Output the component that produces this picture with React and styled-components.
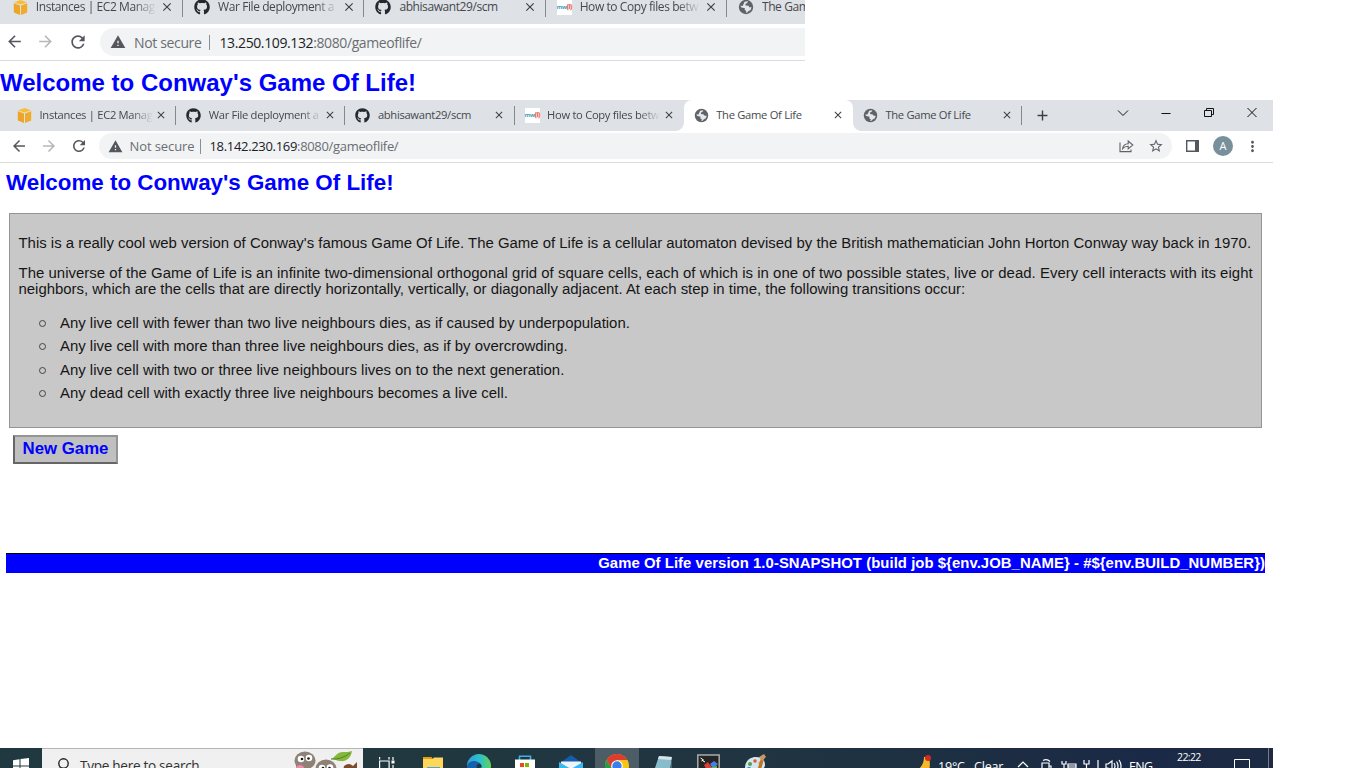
import React from "react";
import styled, { createGlobalStyle, css } from "styled-components";
import {
  MdArrowBack, MdArrowForward, MdRefresh, MdWarning, MdClose, MdStarBorder, MdMoreVert, MdAdd, MdPublic,
} from "react-icons/md";
import { FaGithub } from "react-icons/fa";

const Global = createGlobalStyle`
  * { box-sizing: border-box; }
  body { margin: 0; background: #fff; overflow: hidden; }
  svg { display: block; flex: none; }
`;

const ui = css`font-family: "Open Sans", "Noto Sans", sans-serif;`;

const Screen = styled.div`
  width: 1366px;
  height: 768px;
  display: flex;
  flex-direction: column;
  overflow: hidden;
  background: #fff;
  font-family: "Liberation Sans", Arial, sans-serif;
`;
const UpperShot = styled.section`
  width: 805px;
  height: 100px;
  overflow: hidden;
  flex: none;
`;
const LowerShot = styled.section`
  width: 1273px;
  height: 668px;
  display: flex;
  flex-direction: column;
  overflow: hidden;
`;

/* browser chrome */
const TabStrip = styled.div`
  ${ui}
  display: flex;
  background: #dee1e6;
  height: ${(p) => p.$h}px;
  padding-left: ${(p) => p.$left}px;
  overflow: hidden;
`;
const Tab = styled.div`
  position: relative;
  display: flex;
  flex: none;
  align-items: center;
  width: ${(p) => (p.$big ? 181.3 : 169.2)}px;
  height: ${(p) => (p.$big ? 34 : 31)}px;
  margin-top: ${(p) => (p.$big ? -10 : 0)}px;
  padding-left: ${(p) => (p.$big ? 11 : 10)}px;
  padding-bottom: ${(p) => (p.$big ? 0 : 1)}px;
  color: #45494d;
  background: ${(p) => (p.$active ? "#fff" : "transparent")};
  border-radius: ${(p) => (p.$active ? "8px 8px 0 0" : "0")};
  &::before, &::after {
    content: ${(p) => (p.$active ? '""' : "none")};
    position: absolute;
    bottom: 0;
    width: 8px;
    height: 8px;
  }
  &::before { left: -8px; background: radial-gradient(circle at 0 0, transparent 7.5px, #fff 8px); }
  &::after { right: -8px; background: radial-gradient(circle at 100% 0, transparent 7.5px, #fff 8px); }
`;
const TabTitle = styled.span`
  width: ${(p) => (p.$big ? 119 : 112)}px;
  margin-left: ${(p) => (p.$big ? 8 : 7.5)}px;
  font-size: ${(p) => (p.$big ? 12 : 11.2)}px;
  line-height: 18px;
  letter-spacing: ${(p) => p.$track || 0}px;
  white-space: nowrap;
  overflow: hidden;
  mask-image: ${(p) => (p.$fade ? "linear-gradient(90deg, #000 82%, transparent 101%)" : "none")};
`;
const TabClose = styled(MdClose)`
  margin-left: ${(p) => (p.$big ? 5 : 3.5)}px;
  color: #3c4043;
`;
const Divider = styled.i`
  flex: none;
  width: 1px;
  height: ${(p) => p.$h}px;
  margin-left: auto;
  background: #84888c;
`;
const FaviconMw = styled.span`
  flex: none;
  display: flex;
  align-items: center;
  justify-content: center;
  width: 15px;
  height: 15px;
  background: #fff;
  color: #4a9cc9;
  font-size: 6px;
  font-weight: 700;
  letter-spacing: -0.4px;
  b { color: #e8604c; }
`;
const NewTab = styled(MdAdd)`
  margin: 7px 0 0 12px;
  color: #3c4043;
`;
const WindowButtons = styled.div`
  display: flex;
  margin-left: auto;
  padding: 5px 13px 0 0;
  gap: 27px;
  color: #111;
`;
const Toolbar = styled.div`
  ${ui}
  display: flex;
  flex: none;
  align-items: center;
  height: ${(p) => (p.$big ? 37 : 32)}px;
  padding-left: ${(p) => (p.$big ? 4.5 : 9.5)}px;
  padding-bottom: ${(p) => (p.$big ? 0 : 1)}px;
  border-bottom: 1px solid #d9dbde;
  background: #fff;
  color: #54585c;
  overflow: hidden;
`;
const NavIcons = styled.div`
  display: flex;
  gap: ${(p) => (p.$big ? 12.5 : 12)}px;
  width: ${(p) => (p.$big ? 95.5 : 89.5)}px;
  flex: none;
`;
const AddressBar = styled.div`
  display: flex;
  align-items: center;
  width: ${(p) => (p.$big ? 900 : 1073)}px;
  flex: none;
  height: ${(p) => (p.$big ? 28 : 26)}px;
  padding-left: ${(p) => (p.$big ? 10 : 8.5)}px;
  border-radius: 14px;
  background: #f1f3f4;
  font-size: ${(p) => (p.$big ? 14 : 13)}px;
  white-space: nowrap;
  color: #6a6e73;
`;
const NotSecure = styled.span`
  width: ${(p) => p.$w}px;
  margin-left: ${(p) => p.$gap}px;
  letter-spacing: ${(p) => p.$track}px;
`;
const Bar = styled.i`
  width: 1px;
  height: 15px;
  background: #8c9094;
`;
const Url = styled.span`
  margin-left: ${(p) => p.$gap}px;
  letter-spacing: ${(p) => p.$track}px;
  b { font-weight: 400; color: #202124; }
`;
const AddressActions = styled.div`
  display: flex;
  align-items: center;
  gap: 14px;
  margin-left: auto;
  padding-right: 8.5px;
`;
const Actions = styled.div`
  display: flex;
  align-items: center;
  margin-left: 14px;
`;
const Avatar = styled.span`
  width: 20px;
  height: 20px;
  margin: 0 11px 0 14px;
  border-radius: 50%;
  background: #78909c;
  color: #fff;
  font-size: 11px;
  line-height: 20px;
  text-align: center;
`;

/* page */
const Heading = styled.h1`
  margin: 0;
  color: #0000ff;
  font-weight: 700;
  white-space: nowrap;
  font-size: ${(p) => (p.$big ? 24 : 22.36)}px;
  line-height: 28px;
  padding: ${(p) => (p.$big ? "8px 0 0 0" : "6px 0 0 6px")};
`;
const Intro = styled.article`
  width: 1253px;
  height: 215px;
  flex: none;
  margin: 16px 0 0 9px;
  padding: 21px 0 0 8.5px;
  border: 1px solid #949494;
  background: #c8c8c8;
  color: #161616;
  font-size: 14.93px;
  white-space: nowrap;
`;
const Paragraph = styled.p`
  margin: 0 0 14px;
  line-height: 16px;
`;
const Line = styled.span`
  display: block;
  letter-spacing: ${(p) => p.$track || 0}px;
`;
const Rules = styled.ul`
  list-style: none;
  margin: 12.5px 0 0;
  padding: 0;
`;
const Rule = styled.li`
  display: flex;
  align-items: center;
  height: 23.3px;
  padding-left: 20.5px;
  &::before {
    content: "";
    width: 5px;
    height: 5px;
    margin: 2px 14px 0 0;
    border: 1px solid #444;
    border-radius: 50%;
  }
`;
const NewGame = styled.button`
  align-self: flex-start;
  flex: none;
  width: 105px;
  height: 29px;
  margin: 7px 0 0 13px;
  padding: 0 0 2px;
  border: 2px solid;
  border-color: #949494 #949494 #666 #666;
  background: #c0c0c0;
  color: #0000ff;
  font: 700 16.8px "Liberation Sans", Arial, sans-serif;
  white-space: nowrap;
`;
const Footer = styled.footer`
  flex: none;
  width: 1259px;
  height: 20px;
  margin: 89px 0 0 6px;
  border-top: 1px solid #000;
  background: #0000ff;
  color: #fff;
  font-size: 14.9px;
  font-weight: 700;
  line-height: 18px;
  letter-spacing: 0.045px;
  text-align: right;
  white-space: nowrap;
`;

/* taskbar */
const Taskbar = styled.div`
  ${ui}
  flex: none;
  height: 20px;
  margin-top: auto;
  overflow: hidden;
  background: linear-gradient(90deg, #20383f 0, #21383f 30%, #203441 60%, #1d2f42 75%, #1a2946 90%, #1d2a42 100%);
`;
const TaskRow = styled.div`
  display: flex;
  height: 36px;
  align-items: center;
  color: #fff;
`;
const Slot = styled.div`
  display: flex;
  flex: none;
  width: ${(p) => p.$w || 45.9}px;
  height: 36px;
  align-items: center;
  justify-content: center;
`;
const AppSlots = styled.div`
  display: flex;
  margin-left: 1.5px;
`;
const AppSlot = styled(Slot)`
  background: ${(p) => (p.$active ? "linear-gradient(90deg, transparent 1px, #4d5d65 1px 45px, transparent 45px)" : "transparent")};
`;
const Search = styled.div`
  display: flex;
  flex: none;
  width: 321px;
  height: 36px;
  align-items: center;
  padding: 0 0 2px 14px;
  border-top: 1px solid #b5b5b5;
  background: #f0f0f0;
  color: #333;
  font-size: 13.6px;
  span { margin-left: 11px; white-space: nowrap; letter-spacing: -0.3px; }
  svg:last-child { margin-left: auto; margin-right: 5px; }
`;
const Tray = styled.div`
  display: flex;
  align-items: center;
  height: 34px;
  margin-left: auto;
  font-size: 12.5px;
  white-space: nowrap;
`;
const TrayItem = styled.span`
  display: flex;
  flex: none;
  width: ${(p) => p.$w}px;
  letter-spacing: ${(p) => p.$track || 0}px;
`;
const Clock = styled.span`
  align-self: flex-start;
  width: 57px;
  padding-top: 1px;
  font-size: 10.5px;
  line-height: 15px;
  letter-spacing: -0.6px;
`;

const Cube = () => (
  <svg width="15" height="15" viewBox="0 0 15 15">
    <path d="M7.5 0 14 2.4 7.5 4.6 1 2.4z" fill="#f9bd35" />
    <path d="M.8 3.3 7 5.4V15L.8 12.6z" fill="#eca529" />
    <path d="M14.2 3.3 8 5.4V15l6.2-2.4z" fill="#f0ab2b" />
  </svg>
);
const Mw = () => <FaviconMw>mw<b>(i)</b></FaviconMw>;
const Globe = ({ size }) => (
  <svg width={size} height={size} viewBox="0 0 16 16">
    <circle cx="8" cy="8" r="7.200" fill="#5f6368" />
    <path d="M6.500 2.800 10 2.300 9 4.200 7.400 4.800 7.600 6.400 10.500 6.800 11.300 8.200 13.600 8.300 12.600 11 10.300 12.200 9.200 13.600 7.800 13.800 8.300 12 6.600 10.800 7 9.200 3.500 8.400 2.300 6.800 4.600 7 5.500 5.200z" fill="#e4e6ea" />
  </svg>
);

function tabIcon(kind, big) {
  if (kind === "aws") return <Cube />;
  if (kind === "git") return <FaGithub size={big ? 16 : 15} color="#24292f" />;
  if (kind === "mw") return <Mw />;
  return <Globe size={big ? 16 : 15} />;
}

const tabs = [
  { icon: "aws", title: "Instances | EC2 Manag", fade: true },
  { icon: "git", title: "War File deployment a", fade: true },
  { icon: "git", title: "abhisawant29/scm" },
  { icon: "mw", title: "How to Copy files betw", fade: true },
  { icon: "globe", title: "The Game Of Life", active: true },
  { icon: "globe", title: "The Game Of Life" },
];

function Tabs({ big }) {
  return (big ? tabs.slice(0, 5) : tabs).map((t, i) => {
    const beforeActive = !big && i === 3;
    const active = !big && t.active;
    return (
      <Tab key={i} $big={big} $active={active}>
        {tabIcon(t.icon, big)}
        <TabTitle $big={big} $fade={t.fade} $track={big ? -0.42 : -0.3}>{t.title}</TabTitle>
        <TabClose $big={big} size={big ? 14 : 12} />
        {!active && !beforeActive && <Divider $h={big ? 20 : 19} />}
      </Tab>
    );
  });
}

const ShareIcon = () => (
  <svg width="15" height="14" viewBox="0 0 15 14" fill="none" stroke="#5f6368" strokeWidth="1.1">
    <path d="M1 3.500V12.600h11V10.500M3.600 9.700C4 6.400 6 4.800 9.200 4.700V2l4.600 4-4.600 3.800V7.300C6.600 7.300 5 8 3.600 9.700z" />
  </svg>
);
const PanelIcon = () => (
  <svg width="13" height="12" viewBox="0 0 13 12">
    <path d="M.7.700h11.600v10.600H.7z" fill="none" stroke="#54585c" strokeWidth="1.400" />
    <path d="M9 0H13v12H9z" fill="#54585c" />
  </svg>
);

const WinLogo = () => (
  <svg width="16" height="16" viewBox="0 0 16 16" fill="#fff">
    <path d="M0 2.200 6.500 1.300V7.400H0zM7.500 1.100 16 0v7.400H7.500zM0 8.500h6.500v6.100L0 13.700zM7.500 8.500H16V16l-8.500-1.200z" />
  </svg>
);
const Magnifier = () => (
  <svg width="13" height="16" viewBox="0 0 13 16" fill="none" stroke="#222" strokeWidth="1.400">
    <circle cx="7.500" cy="5.500" r="4.700" />
    <path d="M4.500 9.500 .8 14.500" />
  </svg>
);
const Critters = () => (
  <svg width="64" height="30" viewBox="0 0 64 30">
    <ellipse cx="11" cy="9.500" rx="10.500" ry="9" fill="#8d8275" />
    <path d="M2 14h13v10H2z" fill="#8d8275" />
    <circle cx="7" cy="8" r="3.300" fill="#fff" /><circle cx="15" cy="7" r="3.300" fill="#fff" />
    <circle cx="8" cy="8" r="1.300" fill="#181818" /><circle cx="14.500" cy="7.500" r="1.300" fill="#181818" />
    <path d="M2 16q4-4 8 0l-1 5H3z" fill="#f08bb0" />
    <ellipse cx="32" cy="18" rx="10.500" ry="9.500" fill="#8d8275" />
    <circle cx="28" cy="17" r="3.300" fill="#fff" /><circle cx="36" cy="16.500" r="3.300" fill="#fff" />
    <circle cx="29" cy="17" r="1.300" fill="#181818" /><circle cx="35.500" cy="17" r="1.300" fill="#181818" />
    <path d="M37 8c4-1 5-7 12-7 4 0 6 0 9-1-1 7-6 11-12 10-3 0-5-2-9-2z" fill="#86b83d" />
    <path d="M37 8q10 1 19-6" fill="none" stroke="#4f812e" />
    <path d="M50 15q5-4 9 0l4-4v9H49z" fill="#7b4a2c" />
  </svg>
);
const TaskView = () => (
  <svg width="16" height="22" viewBox="0 0 16 22" fill="none" stroke="#fff" strokeWidth="1.200">
    <path d="M.6 2v2.600M10 2v2.600M.6 6h9.500v9H.6zM14 2v3M14 10v9" />
    <path d="M12.500 5.500h3v3h-3z" fill="#fff" stroke="none" />
  </svg>
);
const Explorer = () => (
  <svg width="21" height="20" viewBox="0 0 21 20">
    <path d="M0 1h8.500l1.500 2H0z" fill="#e0a010" />
    <path d="M0 3h9.500l1.500-1.500H20V19H0z" fill="#ffd65c" />
    <path d="M4 11h13v8H4z" fill="#48a4e4" />
  </svg>
);
const Edge = () => (
  <svg width="24" height="24" viewBox="0 0 24 24">
    <defs>
      <linearGradient id="edge"><stop offset="0" stopColor="#2c9fe0" /><stop offset=".55" stopColor="#31bfc6" /><stop offset="1" stopColor="#62d353" /></linearGradient>
    </defs>
    <circle cx="12" cy="12" r="12" fill="url(#edge)" />
    <path d="M0 13C1 6 8 6 12 8.500c3 2 2.500 4 2 6H9L7 22C2 20 0 17 0 13z" fill="#1460ac" />
    <path d="M10 10.500q4-2.500 4.800 2.500L9.500 15z" fill="#203441" />
  </svg>
);
const Store = () => (
  <svg width="20" height="22" viewBox="0 0 20 22">
    <path d="M4.500 5V1.200h11V5" fill="none" stroke="#35b4ea" strokeWidth="1.600" />
    <path d="M0 4.500h20V22H0z" fill="#fff" />
    <path d="M5 8h4v4H5z" fill="#e84b1c" /><path d="M10 8h4v4h-4z" fill="#7eb800" />
  </svg>
);
const Mail = () => (
  <svg width="24" height="23" viewBox="0 0 24 23">
    <path d="M1 8 12 0l11 8z" fill="#145cac" />
    <path d="M2 6.500h20V14H2z" fill="#eef5fa" />
    <path d="M0 7 12 14 24 7V22H0z" fill="#39b7ee" />
  </svg>
);
const Chrome = () => (
  <svg width="24" height="24" viewBox="0 0 24 24">
    <circle cx="12" cy="12" r="12" fill="#f5c518" />
    <path d="M1.600 6A12 12 0 0 1 22.400 6H12L7 15z" fill="#df3b2f" />
    <path d="M1.600 6A12 12 0 0 0 12 24l5-9H7z" fill="#29994a" />
    <circle cx="12" cy="12" r="5.800" fill="#fff" /><circle cx="12" cy="12" r="4.700" fill="#3c7fec" />
  </svg>
);
const Notepad = () => (
  <svg width="22" height="22" viewBox="0 0 22 22">
    <path d="M7 1 20 2l-3 20H0z" fill="#89bccb" />
    <path d="M7 1 20 2l-.5 3L6 4z" fill="#d4e4e8" />
    <path d="M20 2v18l-3 2z" fill="#51636c" />
  </svg>
);
const Remote = () => (
  <svg width="23" height="24" viewBox="0 0 23 24">
    <path d="M.8 1h21.400v22H.8z" fill="#252525" stroke="#aaa" strokeWidth="1.500" />
    <path d="m3.500 4 3 2-2 1M6 7l2 1" stroke="#fff" fill="none" />
    <path d="m7 11 4-3 4 6-3 6z" fill="#d84137" /><path d="m13 10 4-3 4 3-5 5z" fill="#497ee8" /><path d="m13 14 7-2v7h-6z" fill="#68bd3c" />
  </svg>
);
const Paint = () => (
  <svg width="24" height="24" viewBox="0 0 24 24">
    <path d="M2 14C2 7 7 3 13 3c6 0 9 3 9 8s-6 3-7 7-13 4-13-4z" fill="#d5e5ed" />
    <circle cx="7" cy="10" r="2" fill="#49a547" /><circle cx="12" cy="7" r="1.800" fill="#e05b35" /><circle cx="6" cy="15" r="2" fill="#3278c9" /><circle cx="17" cy="9" r="1.800" fill="#e9b82d" />
    <path d="m14 17 4-13 3 1-4 14z" fill="#b9752b" /><path d="m16 3 5-3 2 3-4 4z" fill="#cd9565" />
  </svg>
);
const Weather = () => (
  <svg width="15" height="22" viewBox="0 0 15 22">
    <path d="M7 2h5c2 9 1 17-7 19H0v-6c4-2 7-7 7-13z" fill="#f3b82c" />
    <circle cx="11" cy="3" r="3" fill="#d22b20" />
  </svg>
);
const TrayIcon = ({ d, w = 14 }) => (
  <svg width={w} height="14" viewBox={`0 0 ${w} 14`} fill="none" stroke="#fff" strokeWidth="1.200"><path d={d} /></svg>
);

const taskApps = [TaskView, Explorer, Edge, Store, Mail, Chrome, Notepad, Remote, Paint];

export default function App() {
  return (
    <Screen>
      <Global />
      <UpperShot>
        <TabStrip $h={24} $left={1.8}><Tabs big /></TabStrip>
        <Toolbar $big>
          <NavIcons $big>
            <MdArrowBack size={19} /><MdArrowForward size={19} color="#b5b8bb" /><MdRefresh size={20} />
          </NavIcons>
          <AddressBar $big>
            <MdWarning size={16} color="#54585c" />
            <NotSecure $w={75} $gap={8} $track={-0.35}>Not secure</NotSecure>
            <Bar />
            <Url $gap={9.5} $track={-0.39}><b>13.250.109.132</b>:8080/gameoflife/</Url>
          </AddressBar>
        </Toolbar>
        <Heading $big>Welcome to Conway's Game Of Life!</Heading>
      </UpperShot>

      <LowerShot>
        <TabStrip $h={31} $left={7}>
          <Tabs />
          <NewTab size={17} />
          <WindowButtons>
            <svg width="16" height="16" viewBox="0 0 16 16" fill="none" stroke="currentColor"><path d="m3 5.500 5 5 5-5" /></svg>
            <svg width="16" height="16" viewBox="0 0 16 16" fill="none" stroke="currentColor"><path d="M3.500 8.500h9" /></svg>
            <svg width="16" height="16" viewBox="0 0 16 16" fill="none" stroke="currentColor"><path d="M3.500 5.500h7v6h-7zM5.500 5.500v-2h7v6h-2" /></svg>
            <svg width="16" height="16" viewBox="0 0 16 16" fill="none" stroke="currentColor"><path d="m3.500 3 9 9m0-9-9 9" /></svg>
          </WindowButtons>
        </TabStrip>
        <Toolbar>
          <NavIcons>
            <MdArrowBack size={18} /><MdArrowForward size={18} color="#b5b8bb" /><MdRefresh size={18} />
          </NavIcons>
          <AddressBar>
            <MdWarning size={15} color="#54585c" />
            <NotSecure $w={70.5} $gap={7} $track={-0.1}>Not secure</NotSecure>
            <Bar />
            <Url $gap={8.5} $track={-0.32}><b>18.142.230.169</b>:8080/gameoflife/</Url>
            <AddressActions><ShareIcon /><MdStarBorder size={16} color="#5f6368" /></AddressActions>
          </AddressBar>
          <Actions><PanelIcon /><Avatar>A</Avatar><MdMoreVert size={17} /></Actions>
        </Toolbar>

        <Heading>Welcome to Conway's Game Of Life!</Heading>
        <Intro>
          <Paragraph>
            <Line>This is a really cool web version of Conway's famous Game Of Life. The Game of Life is a cellular automaton devised by the British mathematician John Horton Conway way back in 1970.</Line>
          </Paragraph>
          <Paragraph>
            <Line $track={0.034}>The universe of the Game of Life is an infinite two-dimensional orthogonal grid of square cells, each of which is in one of two possible states, live or dead. Every cell interacts with its eight</Line>
            <Line>neighbors, which are the cells that are directly horizontally, vertically, or diagonally adjacent. At each step in time, the following transitions occur:</Line>
          </Paragraph>
          <Rules>
            <Rule>Any live cell with fewer than two live neighbours dies, as if caused by underpopulation.</Rule>
            <Rule>Any live cell with more than three live neighbours dies, as if by overcrowding.</Rule>
            <Rule>Any live cell with two or three live neighbours lives on to the next generation.</Rule>
            <Rule>Any dead cell with exactly three live neighbours becomes a live cell.</Rule>
          </Rules>
        </Intro>
        <NewGame>New Game</NewGame>
        <Footer>{"Game Of Life version 1.0-SNAPSHOT (build job ${env.JOB_NAME} - #${env.BUILD_NUMBER})"}</Footer>

        <Taskbar>
          <TaskRow>
            <Slot $w={42}><WinLogo /></Slot>
            <Search><Magnifier /><span>Type here to search</span><Critters /></Search>
            <AppSlots>
              {taskApps.map((Icon, i) => <AppSlot key={i} $active={Icon === Chrome}><Icon /></AppSlot>)}
            </AppSlots>
            <Tray>
              <TrayItem $w={21}><Weather /></TrayItem>
              <TrayItem $w={36} $track={-0.2}>19°C</TrayItem>
              <TrayItem $w={43} $track={-0.2}>Clear</TrayItem>
              <TrayItem $w={24}><TrayIcon d="M1 8l5-5 5 5" /></TrayItem>
              <TrayItem $w={20}><TrayIcon d="M1 4h7v10H1zM2 1.500q4-2 7 1M8 7h2v5H8" /></TrayItem>
              <TrayItem $w={22}><TrayIcon w={16} d="M1 2v3h4V2M3 5v8M7 5h8v4H7zM7 7h8" /></TrayItem>
              <TrayItem $w={14}><TrayIcon w={8} d="M1 1v4h5V1M3.500 5v6" /></TrayItem>
              <TrayItem $w={8}><TrayIcon w={4} d="M1 1v12" /></TrayItem>
              <TrayItem $w={24}><TrayIcon w={17} d="M1 5h2l4-3v10L3 9H1zM9 4q2 3 0 6M11.500 2.500q3 4.500 0 9M14 1q4 6 0 12" /></TrayItem>
              <TrayItem $w={48} $track={-0.7}>ENG</TrayItem>
              <Clock>22:22</Clock>
              <TrayItem $w={34}><svg width="16" height="14" viewBox="0 0 16 14" fill="none" stroke="#fff"><path d="M.5.500h15v12H8l-3 3v-3H.5z" /></svg></TrayItem>
              <TrayItem $w={5}><svg width="1" height="36" viewBox="0 0 1 36"><path d="M0 0h1v36H0z" fill="#737d8c" /></svg></TrayItem>
            </Tray>
          </TaskRow>
        </Taskbar>
      </LowerShot>
    </Screen>
  );
}
